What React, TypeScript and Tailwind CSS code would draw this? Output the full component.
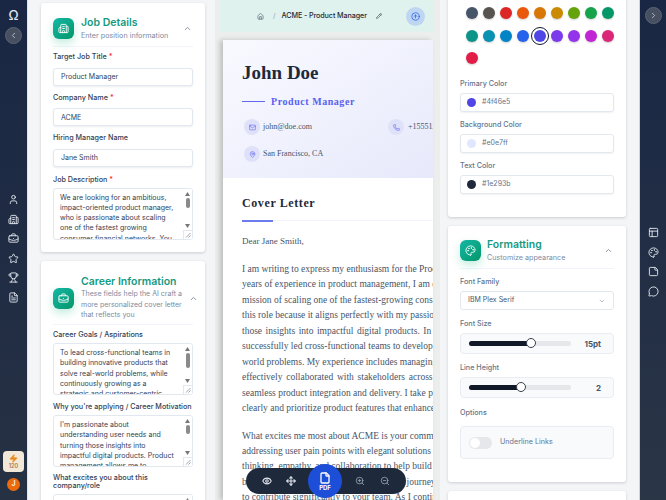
import React from 'react';
import {
  BriefcaseBusiness, Building2, ChevronDown, ChevronLeft, ChevronRight, ChevronUp, CircleArrowUp, Eye, File, FileText, Home,
  Mail, MapPin, MessageCircle, Move, Palette, PanelsTopLeft, Pencil, Phone, StickyNote, Star, Trophy, User, Zap,
  ZoomIn, ZoomOut,
} from 'lucide-react';

const swatches = [
  '#475569', '#57534e', '#dc2626', '#ea580c', '#d97706', '#ca8a04', '#65a30d', '#16a34a', '#059669',
  '#0d9488', '#0891b2', '#0284c7', '#2563eb', '#4f46e5', '#7c3aed', '#9333ea', '#c026d3', '#db2777', '#e11d48',
];

const para1 = [
  'I am writing to express my enthusiasm for the Product Manager role. With over five',
  'years of experience in product management, I am especially drawn to ACME and the',
  'mission of scaling one of the fastest-growing consumer financial networks. I chose',
  'this role because it aligns perfectly with my passion for user needs and for turning',
  'those insights into impactful digital products. In my current position, I have',
  'successfully led cross-functional teams to develop and launch solutions for real-',
  'world problems. My experience includes managing the product roadmap and I have',
  'effectively collaborated with stakeholders across design and engineering for',
  'seamless product integration and delivery. I take pride in my ability to communicate',
  'clearly and prioritize product features that enhance the experience of customers.',
];

const para2 = [
  'What excites me most about ACME is your commitment to innovation and to customers,',
  'addressing user pain points with elegant solutions that scale. I believe that design',
  'thinking, empathy, and collaboration to help build great products is what I can bring',
  'because I have led teams through the same journey, and I am ready to thrive and',
  'to contribute significantly to your team. As I continue to grow in this field, I hope',
];

const Label = ({ children, req }: { children: React.ReactNode; req?: boolean }) => (
  <div className="text-[7.2px] leading-[8px] font-medium text-[#334155]">
    {children}
    {req && <span className="text-red-500"> *</span>}
  </div>
);

const TextInput = ({ value }: { value: string }) => (
  <input
    readOnly
    value={value}
    className="mt-[4px] h-[18px] w-full rounded-[3px] border border-[#e2e8f0] bg-white px-[7px] text-[7px] text-[#334155] shadow-[0_1px_2px_rgba(15,23,42,0.08)] outline-none"
  />
);

// the browser's scrollbar doesn't show in the shot, so arrows, thumb and grip are drawn over the field
const Area = ({ value, thumb }: { value: string; thumb: number }) => (
  <div className="relative mt-[4px] h-[52px] overflow-hidden rounded-[3px] border border-[#e2e8f0] bg-white">
    <textarea
      readOnly
      value={value}
      className="block h-full w-full resize-none overflow-hidden py-[4px] pl-[6px] pr-[18px] text-[7px] leading-[10.3px] text-[#334155] outline-none"
    />
    <div className="absolute right-0 top-0 flex h-full w-[9px] flex-col items-center bg-white pt-[3px]">
      <svg width="5" height="4" viewBox="0 0 5 4" className="fill-[#777]"><path d="M2.5 0 5 4H0z" /></svg>
      <span className="mt-[2px] w-[4px] rounded-full bg-[#8a8a8a]" style={{ height: thumb }} />
      <svg width="5" height="4" viewBox="0 0 5 4" className="absolute bottom-[11px] fill-[#777]"><path d="M0 0h5L2.5 4z" /></svg>
      <svg width="9" height="9" viewBox="0 0 9 9" className="absolute bottom-0 right-0 fill-white stroke-[#9ca3af]">
        <rect x="0.5" y="0.5" width="9" height="9" stroke="#e2e8f0" />
        <path d="M3 7.5 7.5 3M5.5 7.5l2-2" />
      </svg>
    </div>
  </div>
);

const Tile = ({ children }: { children: React.ReactNode }) => (
  <div className="flex h-[21px] w-[21px] shrink-0 items-center justify-center rounded-[6px] bg-gradient-to-br from-[#14b8a6] to-[#059669] text-white shadow-[0_4px_8px_rgba(16,185,129,0.25)]">
    {children}
  </div>
);

const ColorField = ({ label, value, color }: { label: string; value: string; color: string }) => (
  <div>
    <div className="text-[7.2px] leading-[10px] font-medium text-[#64748b]">{label}</div>
    <div className="mt-[4px] flex h-[19px] items-center gap-[6px] rounded-[3px] border border-[#e2e8f0] bg-white px-[6px] shadow-[0_1px_2px_rgba(15,23,42,0.06)]">
      <span className="h-[9px] w-[9px] rounded-full" style={{ backgroundColor: color }} />
      <span className="text-[7px] text-[#64748b]">{value}</span>
    </div>
  </div>
);

const Slider = ({ fill, value }: { fill: string; value: string }) => (
  <div className="mt-[4px] flex h-[21px] items-center rounded-[4px] border border-[#e8edf3] bg-[#f8fafc] pl-[8px] pr-[12px]">
    <div className="relative h-[5px] w-[102px] rounded-full bg-[#e5e7eb]">
      <div className="h-full rounded-full bg-[#111827]" style={{ width: fill }} />
      <div
        className="absolute top-[-3px] ml-[-5px] h-[10px] w-[10px] rounded-full border border-[#374151] bg-white"
        style={{ left: fill }}
      />
    </div>
    <span className="ml-auto text-[8px] font-bold text-[#475569]">{value}</span>
  </div>
);

const Line = ({ text }: { text: string }) => (
  <div className="w-[300px] [text-align-last:justify] whitespace-nowrap">{text}</div>
);

export default function App() {
  return (
    <div className="flex h-[500px] w-[666px] overflow-hidden bg-[#f4f5f7] font-['Inter',sans-serif]">
      {/* left rail */}
      <aside className="flex w-[28px] shrink-0 flex-col items-center border-r border-[#dfe3ea] bg-gradient-to-b from-[#1a2744] to-[#263143] pt-[7px] text-white">
        <span className="h-[16px] text-[13px] leading-[16px] font-medium text-[#e2e8f0]">Ω</span>
        <button className="mt-[4px] flex h-[17px] w-[17px] items-center justify-center rounded-full border border-[#5b6473] bg-[#475061] text-[#cbd5e1]">
          <ChevronLeft size={9} />
        </button>
        <div className="mt-[150px] flex flex-col items-center gap-[8.6px] text-[#e2e8f0]">
          <User size={11} />
          <Building2 size={11} />
          <BriefcaseBusiness size={11} />
          <Star size={11} />
          <Trophy size={11} />
          <FileText size={11} />
        </div>
        <div className="mt-auto mb-[6px] flex h-[21px] w-[21px] flex-col items-center justify-center rounded-[4px] bg-[#f1e8d8]">
          <Zap size={9} className="fill-[#ea8a1e] text-[#ea8a1e]" />
          <span className="text-[5.5px] leading-[7px] font-semibold text-[#b9723a]">120</span>
        </div>
        <div className="mb-[9px] flex h-[13px] w-[13px] items-center justify-center rounded-full bg-[#ea6a0c] text-[7px] font-semibold">
          J
        </div>
      </aside>

      {/* form column */}
      <section className="flex w-[187px] shrink-0 flex-col gap-[9px] pl-[13px] pt-[3px]">
        <div className="h-[249px] w-[164px] shrink-0 rounded-[3px] bg-white px-[12px] pt-[15px] shadow-[0_1px_3px_rgba(15,23,42,0.18)]">
          <div className="flex h-[29px] items-start gap-[7px] border-b border-[#f1f5f9]">
            <Tile><Building2 size={11} /></Tile>
            <div className="flex-1">
              <div className="text-[10.5px] leading-[10px] font-semibold text-[#169a7f]">Job Details</div>
              <div className="mt-[3px] whitespace-nowrap text-[7.2px] leading-[9px] text-[#7c8ba1]">Enter position information</div>
            </div>
            <ChevronUp size={9} className="mt-[6px] mr-[1px] text-[#64748b]" />
          </div>
          <div className="mt-[6px]"><Label req>Target Job Title</Label></div>
          <TextInput value="Product Manager" />
          <div className="mt-[8px]"><Label req>Company Name</Label></div>
          <TextInput value="ACME" />
          <div className="mt-[8px]"><Label>Hiring Manager Name</Label></div>
          <TextInput value="Jane Smith" />
          <div className="mt-[9px]"><Label req>Job Description</Label></div>
          <Area thumb={10} value="We are looking for an ambitious, impact-oriented product manager, who is passionate about scaling one of the fastest growing consumer financial networks. You will work across teams to ship products that customers love and trust every day." />
        </div>

        <div className="w-[164px] shrink-0 rounded-[3px] bg-white px-[12px] pt-[14px] pb-[20px] shadow-[0_1px_3px_rgba(15,23,42,0.18)]">
          <div className="flex h-[50px] items-center gap-[7px] border-b border-[#f1f5f9] pb-[2px]">
            <Tile><BriefcaseBusiness size={11} /></Tile>
            <div className="flex-1">
              <div className="whitespace-nowrap text-[10.5px] leading-[11px] font-semibold text-[#169a7f]">Career Information</div>
              <div className="mt-[2px] whitespace-nowrap text-[7px] leading-[10.4px] text-[#7c8ba1]">
                These fields help the AI craft a<br />more personalized cover letter<br />that reflects you
              </div>
            </div>
            <ChevronUp size={9} className="mr-[1px] shrink-0 text-[#64748b]" />
          </div>
          <div className="mt-[6px]"><Label>Career Goals / Aspirations</Label></div>
          <Area thumb={15} value="To lead cross-functional teams in building innovative products that solve real-world problems, while continuously growing as a strategic and customer-centric product leader for years to come, with a focus on impact." />
          <div className="mt-[8px]"><Label>Why you're applying / Career Motivation</Label></div>
          <Area thumb={9} value="I'm passionate about understanding user needs and turning those insights into impactful digital products. Product management allows me to combine strategy, design, and technology in the work that I do every single day with my team." />
          <div className="mt-[7px]"><Label>What excites you about this company/role</Label></div>
          <Area thumb={10} value="ACME is scaling quickly and addressing real user pain points." />
        </div>
      </section>

      {/* preview */}
      <main className="relative flex w-[225px] shrink-0 flex-col bg-[#eceded] pr-[7px]">
        <div className="ml-[5px] flex h-[32px] shrink-0 items-center bg-[#e0f2ee] pl-[37px] text-[#1f2937]">
          <Home size={7} className="text-[#475569]" />
          <span className="ml-[9px] text-[7px] text-[#94a3b8]">/</span>
          <span className="ml-[6px] whitespace-nowrap text-[7.2px] font-medium tracking-[-0.1px]">ACME - Product Manager</span>
          <Pencil size={6} className="ml-[9px]" />
          <div className="ml-[24px] flex h-[19px] w-[19px] shrink-0 items-center justify-center rounded-full bg-[#bfd6f3] text-[#2563eb]">
            <CircleArrowUp size={9} />
          </div>
        </div>
        <article className="mt-[8px] ml-[8px] flex-1 overflow-hidden bg-white font-['Liberation_Serif',serif] shadow-[-3px_0_5px_rgba(0,0,0,0.2)]">
          <header className="h-[138px] bg-gradient-to-br from-[#f9faff] to-[#e7e9fb] pl-[19px] pt-[21px]">
            <h1 className="text-[19px] leading-[24px] font-bold text-[#1e293b]">John Doe</h1>
            <div className="mt-[9px] flex items-center gap-[6px]">
              <span className="h-px w-[23px] bg-[#6366f1]" />
              <span className="text-[10px] font-bold tracking-[0.55px] text-[#5b5ff0]">Product Manager</span>
            </div>
            <div className="mt-[10px] flex items-center">
              <span className="ml-[2px] flex h-[16px] w-[16px] shrink-0 items-center justify-center rounded-full bg-[#dfe1f8] text-[#6366f1]"><Mail size={7} /></span>
              <span className="ml-[3px] w-[125px] shrink-0 text-[8px] text-[#475569]">john@doe.com</span>
              <span className="flex h-[16px] w-[16px] shrink-0 items-center justify-center rounded-full bg-[#dfe1f8] text-[#6366f1]"><Phone size={7} /></span>
              <span className="ml-[4px] whitespace-nowrap text-[8px] text-[#475569]">+15551234567</span>
            </div>
            <div className="mt-[11px] flex items-center">
              <span className="ml-[2px] flex h-[16px] w-[16px] items-center justify-center rounded-full bg-[#dfe1f8] text-[#6366f1]"><MapPin size={7} /></span>
              <span className="ml-[3px] text-[8px] text-[#475569]">San Francisco, CA</span>
            </div>
          </header>
          <div className="pl-[19px]">
            <h2 className="mt-[17px] text-[12px] leading-[16px] font-bold tracking-[0.6px] text-[#1e293b]">Cover Letter</h2>
            <div className="mt-[9px] h-px bg-[#f1f5f9]">
              <div className="h-[1.5px] w-[31px] bg-[#6b7cf0]" />
            </div>
            <p className="mt-[14px] text-[9px] leading-[12px] text-[#475569]">Dear Jane Smith,</p>
            <div className="mt-[15px] text-[9.5px] leading-[15.45px] text-[#475569]">
              {para1.map(text => <Line key={text} text={text} />)}
            </div>
            <div className="mt-[12px] text-[9.5px] leading-[15.45px] text-[#475569]">
              {para2.map(text => <Line key={text} text={text} />)}
            </div>
          </div>
        </article>
        {/* floating toolbar */}
        <div className="absolute left-[31px] top-[468px] flex h-[26px] w-[160px] items-center rounded-full bg-[#1e293b] text-[#e2e8f0]">
          <Eye size={10} strokeWidth={2.6} className="ml-[16px]" />
          <Move size={10} strokeWidth={2.6} className="ml-[14px]" />
          <ZoomIn size={10} className="ml-[59px] text-[#94a3b8]" />
          <ZoomOut size={10} className="ml-[15px] text-[#94a3b8]" />
          <div className="absolute left-[62px] top-[-4px] flex h-[34px] w-[34px] flex-col items-center justify-center rounded-full bg-[#1d4ed8] text-white">
            <File size={12} strokeWidth={2.6} />
            <span className="text-[6px] leading-[7px] font-bold">PDF</span>
          </div>
        </div>
      </main>

      {/* settings column */}
      <section className="flex w-[199px] shrink-0 flex-col gap-[9px] pl-[8px] pr-[13px]">
        <div className="mt-[-20px] h-[237px] shrink-0 rounded-[3px] bg-white px-[12px] pt-[27px] shadow-[0_1px_3px_rgba(15,23,42,0.18)]">
          <div className="grid grid-cols-[repeat(9,17px)] gap-y-[10.5px] pl-[3px]">
            {swatches.map(color => (
              <span key={color} className="flex h-[12px] w-[17px] items-center justify-center">
                <span
                  className={color === '#4f46e5' ? 'h-[12px] w-[12px] rounded-full outline outline-[1px] outline-offset-[2px] outline-[#111827]' : 'h-[12px] w-[12px] rounded-full shadow-[0_1px_2px_rgba(0,0,0,0.2)]'}
                  style={{ backgroundColor: color }}
                />
              </span>
            ))}
          </div>
          <div className="mt-[15px] flex flex-col gap-[8px]">
            <ColorField label="Primary Color" value="#4f46e5" color="#4f46e5" />
            <ColorField label="Background Color" value="#e0e7ff" color="#e0e7ff" />
            <ColorField label="Text Color" value="#1e293b" color="#1e293b" />
          </div>
        </div>

        <div className="h-[256px] shrink-0 rounded-[3px] bg-white px-[12px] pt-[14px] shadow-[0_1px_3px_rgba(15,23,42,0.18)]">
          <div className="flex h-[29px] items-start gap-[6px] border-b border-[#f1f5f9]">
            <Tile><Palette size={11} /></Tile>
            <div className="flex-1">
              <div className="text-[10.5px] leading-[10px] font-semibold text-[#169a7f]">Formatting</div>
              <div className="mt-[3px] text-[7.2px] leading-[9px] text-[#7c8ba1]">Customize appearance</div>
            </div>
            <ChevronUp size={9} className="mt-[6px] mr-[1px] text-[#64748b]" />
          </div>
          <div className="mt-[8px] text-[7.2px] leading-[10px] font-medium text-[#64748b]">Font Family</div>
          <div className="mt-[4px] flex h-[19px] items-center justify-between rounded-[3px] border border-[#e2e8f0] px-[7px] text-[7px] text-[#475569]">
            IBM Plex Serif
            <ChevronDown size={8} className="text-[#94a3b8]" />
          </div>
          <div className="mt-[9px] text-[7.2px] leading-[10px] font-medium text-[#64748b]">Font Size</div>
          <Slider fill="61%" value="15pt" />
          <div className="mt-[9px] text-[7.2px] leading-[10px] font-medium text-[#64748b]">Line Height</div>
          <Slider fill="51%" value="2" />
          <div className="mt-[10px] text-[7.2px] leading-[10px] font-medium text-[#64748b]">Options</div>
          <div className="mt-[8px] flex h-[33px] items-center gap-[8px] rounded-[4px] border border-[#e8edf3] bg-[#f8fafc] pl-[8px]">
            <span className="flex h-[12px] w-[23px] items-center rounded-full bg-[#e5e7eb] pl-[1px]">
              <span className="h-[10px] w-[10px] rounded-full bg-white" />
            </span>
            <span className="text-[7.2px] text-[#64748b]">Underline Links</span>
          </div>
        </div>
        <div className="h-[40px] shrink-0 rounded-[3px] bg-white shadow-[0_1px_3px_rgba(15,23,42,0.18)]" />
      </section>

      {/* right rail */}
      <aside className="flex w-[27px] shrink-0 flex-col items-center border-l border-[#cfd4dc] bg-gradient-to-b from-[#1a2744] to-[#2a3546] pt-[7px] text-[#e2e8f0]">
        <button className="flex h-[17px] w-[17px] items-center justify-center rounded-full border border-[#5b6473] bg-[#475061] text-[#cbd5e1]">
          <ChevronRight size={9} />
        </button>
        <div className="mt-[203px] flex flex-col items-center gap-[8.6px]">
          <PanelsTopLeft size={11} />
          <Palette size={11} />
          <StickyNote size={11} />
          <MessageCircle size={11} />
        </div>
      </aside>
    </div>
  );
}
